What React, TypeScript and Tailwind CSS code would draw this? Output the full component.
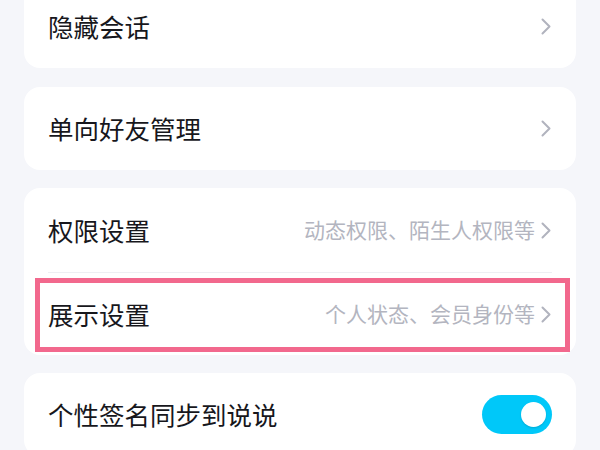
import React, { useState } from 'react';

const Chevron = () => (
  <svg width="10" height="17" viewBox="0 0 10 17" fill="none" className="shrink-0">
    <polyline points="1.5,1.5 8.5,8.5 1.5,15.5" stroke="#b1b3be" strokeWidth="2" strokeLinecap="round" strokeLinejoin="round" />
  </svg>
);

const Row = ({ title, hint, className = '' }: { title: string; hint?: string; className?: string }) => (
  <div className={`flex items-center justify-between pl-6 pr-[25px] ${className}`}>
    <span className="text-[25.5px] text-[#17171c]">{title}</span>
    <div className="flex items-center gap-[6px]">
      {hint && <span className="text-[21px] text-[#b3b5c0]">{hint}</span>}
      <Chevron />
    </div>
  </div>
);

export default function App() {
  const [syncSign, setSyncSign] = useState(true);

  return (
    <div
      className="w-[600px] h-[450px] overflow-hidden bg-[#f5f6fa] px-6 flex flex-col gap-[18px]"
      style={{ fontFamily: '"Noto Sans CJK SC", "Noto Sans", sans-serif' }}
    >
      {/* Hidden chats */}
      <div className="bg-white rounded-[16px] -mt-[15px] mb-px shrink-0">
        <Row title="隐藏会话" className="h-[83px]" />
      </div>

      {/* One-way friends */}
      <div className="bg-white rounded-[16px] shrink-0">
        <Row title="单向好友管理" className="h-[83px]" />
      </div>

      {/* Permissions + display */}
      <div className="bg-white rounded-[16px] shrink-0">
        <Row title="权限设置" hint="动态权限、陌生人权限等" className="h-[84px]" />
        <div className="mx-6 h-px bg-[#eeeff3]" />
        <div className="relative">
          <Row title="展示设置" hint="个人状态、会员身份等" className="h-[82px]" />
          <div className="absolute left-[11px] right-[6px] top-[5px] bottom-[3px] border-[5px] border-[#f2688d] pointer-events-none" />
        </div>
      </div>

      {/* Signature sync */}
      <div className="bg-white rounded-[16px] shrink-0">
        <div className="flex items-center justify-between pl-6 pr-6 h-[83px]">
          <span className="text-[25.5px] text-[#17171c]">个性签名同步到说说</span>
          <button
            onClick={() => setSyncSign(!syncSign)}
            className={`relative w-[70px] h-[39px] rounded-full flex items-center px-[6px] ${
              syncSign ? 'bg-[#00c8f9] justify-end' : 'bg-[#e3e4e8] justify-start'
            }`}
          >
            <span className="w-[25px] h-[25px] rounded-full bg-white shadow-[0_1px_2px_rgba(0,0,0,0.15)]" />
          </button>
        </div>
      </div>
    </div>
  );
}
